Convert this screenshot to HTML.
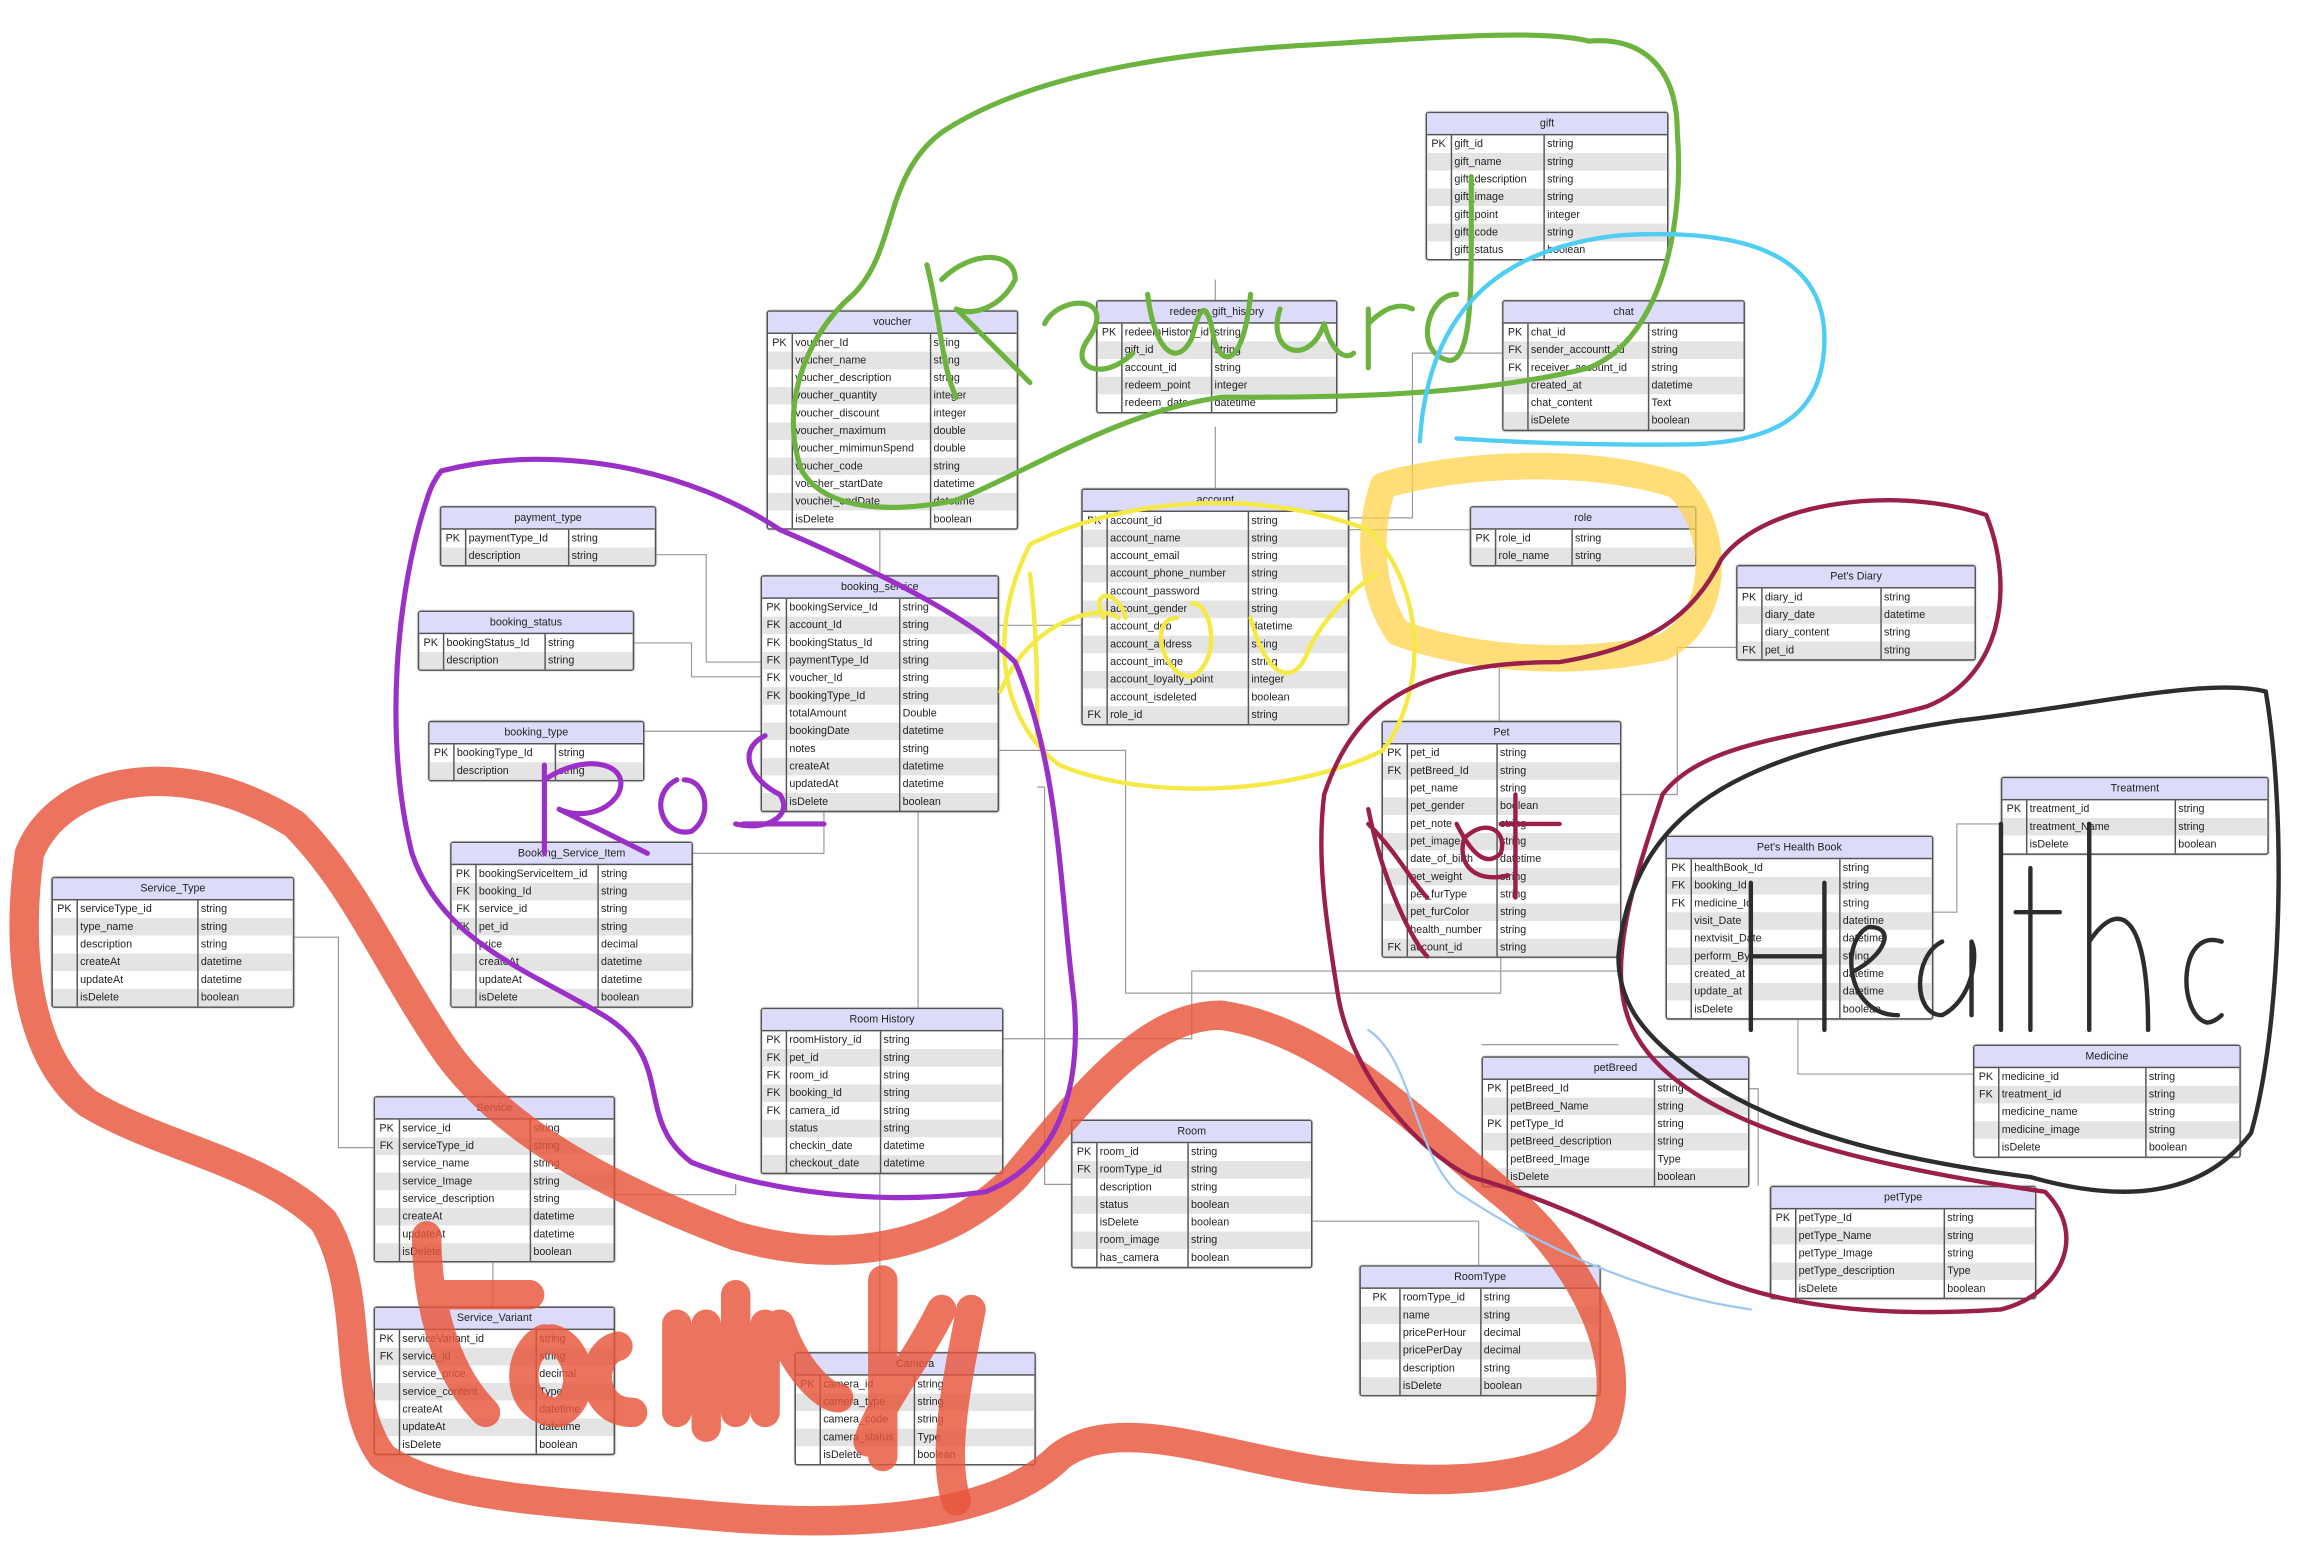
<!DOCTYPE html>
<html><head><meta charset="utf-8">
<style>
html,body{margin:0;padding:0;background:#fff;overflow:hidden;}
#w{position:absolute;left:0;top:0;width:1568px;height:1052px;transform:scale(1.4713);transform-origin:0 0;font-family:"Liberation Sans",sans-serif;}
.t{position:absolute;border:1px solid #555;border-radius:2px;background:#fff;font-size:7.3px;color:#222;box-shadow:0 0 1px #999;}
.t .h{height:14px;line-height:14px;text-align:center;background:#dcdcfa;border-bottom:1px solid #555;}
.t table{border-collapse:collapse;width:100%;table-layout:fixed;}
.t td{height:12px;padding:0 0 0 2px;white-space:nowrap;overflow:hidden;line-height:12px;}
.t td:nth-child(1){border-right:1px solid #555;text-align:center;padding:0;}
.t td:nth-child(2){border-right:1px solid #555;}
.t tr:nth-child(even) td{background:#e4e4e4;}
svg{position:absolute;left:0;top:0;}
</style></head><body><div id="w">
<svg width="1568" height="1052" style="z-index:0">
<g stroke="#999" stroke-width="0.8" fill="none">
<path d="M826 190V204M826 290V332M915 352H960V240H1021M915 360H999M1019 454V490M677 425H735M677 510H765V675H1020V650M598 358V391M444 377H480V450H517M429 437H470V460H517M436 497H517M469 580H560V540H677M624 550V685M598 797V919M416 812H500V805M680 706H810V660H1100M890 830H1005V860M198 637H230V780H254M335 854V888M1100 540H1140V440H1180M1312 620H1330V560H1360M1222 691V730H1341M1187 740H1195V806M1100 710H1007M705 535H710V805H728"/>
</g>
</svg>

<div class="t" style="left:969px;top:76px;width:163px"><div class="h">gift</div><table><colgroup><col style="width:16px"><col style="width:63px"><col></colgroup>
<tr><td>PK</td><td>gift_id</td><td>string</td></tr><tr><td></td><td>gift_name</td><td>string</td></tr><tr><td></td><td>gift_description</td><td>string</td></tr><tr><td></td><td>gift_image</td><td>string</td></tr><tr><td></td><td>gift_point</td><td>integer</td></tr><tr><td></td><td>gift_code</td><td>string</td></tr><tr><td></td><td>gift_status</td><td>boolean</td></tr></table></div>

<div class="t" style="left:521px;top:211px;width:169px"><div class="h">voucher</div><table><colgroup><col style="width:16px"><col style="width:94px"><col></colgroup>
<tr><td>PK</td><td>voucher_Id</td><td>string</td></tr><tr><td></td><td>voucher_name</td><td>string</td></tr><tr><td></td><td>voucher_description</td><td>string</td></tr><tr><td></td><td>voucher_quantity</td><td>integer</td></tr><tr><td></td><td>voucher_discount</td><td>integer</td></tr><tr><td></td><td>voucher_maximum</td><td>double</td></tr><tr><td></td><td>voucher_mimimunSpend</td><td>double</td></tr><tr><td></td><td>voucher_code</td><td>string</td></tr><tr><td></td><td>voucher_startDate</td><td>datetime</td></tr><tr><td></td><td>voucher_endDate</td><td>datetime</td></tr><tr><td></td><td>isDelete</td><td>boolean</td></tr></table></div>

<div class="t" style="left:745px;top:204px;width:162px"><div class="h">redeem_gift_history</div><table><colgroup><col style="width:16px"><col style="width:61px"><col></colgroup>
<tr><td>PK</td><td>redeemHistory_id</td><td>string</td></tr><tr><td></td><td>gift_id</td><td>string</td></tr><tr><td></td><td>account_id</td><td>string</td></tr><tr><td></td><td>redeem_point</td><td>integer</td></tr><tr><td></td><td>redeem_date</td><td>datetime</td></tr></table></div>

<div class="t" style="left:1021px;top:204px;width:163px"><div class="h">chat</div><table><colgroup><col style="width:16px"><col style="width:82px"><col></colgroup>
<tr><td>PK</td><td>chat_id</td><td>string</td></tr><tr><td>FK</td><td>sender_accountt_id</td><td>string</td></tr><tr><td>FK</td><td>receiver_account_id</td><td>string</td></tr><tr><td></td><td>created_at</td><td>datetime</td></tr><tr><td></td><td>chat_content</td><td>Text</td></tr><tr><td></td><td>isDelete</td><td>boolean</td></tr></table></div>

<div class="t" style="left:735px;top:332px;width:180px"><div class="h">account</div><table><colgroup><col style="width:16px"><col style="width:96px"><col></colgroup>
<tr><td>PK</td><td>account_id</td><td>string</td></tr><tr><td></td><td>account_name</td><td>string</td></tr><tr><td></td><td>account_email</td><td>string</td></tr><tr><td></td><td>account_phone_number</td><td>string</td></tr><tr><td></td><td>account_password</td><td>string</td></tr><tr><td></td><td>account_gender</td><td>string</td></tr><tr><td></td><td>account_dob</td><td>datetime</td></tr><tr><td></td><td>account_address</td><td>string</td></tr><tr><td></td><td>account_image</td><td>string</td></tr><tr><td></td><td>account_loyalty_point</td><td>integer</td></tr><tr><td></td><td>account_isdeleted</td><td>boolean</td></tr><tr><td>FK</td><td>role_id</td><td>string</td></tr></table></div>

<div class="t" style="left:999px;top:344px;width:152px"><div class="h">role</div><table><colgroup><col style="width:16px"><col style="width:52px"><col></colgroup>
<tr><td>PK</td><td>role_id</td><td>string</td></tr><tr><td></td><td>role_name</td><td>string</td></tr></table></div>

<div class="t" style="left:299px;top:344px;width:145px"><div class="h">payment_type</div><table><colgroup><col style="width:16px"><col style="width:70px"><col></colgroup>
<tr><td>PK</td><td>paymentType_Id</td><td>string</td></tr><tr><td></td><td>description</td><td>string</td></tr></table></div>

<div class="t" style="left:284px;top:415px;width:145px"><div class="h">booking_status</div><table><colgroup><col style="width:16px"><col style="width:69px"><col></colgroup>
<tr><td>PK</td><td>bookingStatus_Id</td><td>string</td></tr><tr><td></td><td>description</td><td>string</td></tr></table></div>

<div class="t" style="left:291px;top:490px;width:145px"><div class="h">booking_type</div><table><colgroup><col style="width:16px"><col style="width:69px"><col></colgroup>
<tr><td>PK</td><td>bookingType_Id</td><td>string</td></tr><tr><td></td><td>description</td><td>string</td></tr></table></div>

<div class="t" style="left:517px;top:391px;width:160px"><div class="h">booking_service</div><table><colgroup><col style="width:16px"><col style="width:77px"><col></colgroup>
<tr><td>PK</td><td>bookingService_Id</td><td>string</td></tr><tr><td>FK</td><td>account_Id</td><td>string</td></tr><tr><td>FK</td><td>bookingStatus_Id</td><td>string</td></tr><tr><td>FK</td><td>paymentType_Id</td><td>string</td></tr><tr><td>FK</td><td>voucher_Id</td><td>string</td></tr><tr><td>FK</td><td>bookingType_Id</td><td>string</td></tr><tr><td></td><td>totalAmount</td><td>Double</td></tr><tr><td></td><td>bookingDate</td><td>datetime</td></tr><tr><td></td><td>notes</td><td>string</td></tr><tr><td></td><td>createAt</td><td>datetime</td></tr><tr><td></td><td>updatedAt</td><td>datetime</td></tr><tr><td></td><td>isDelete</td><td>boolean</td></tr></table></div>

<div class="t" style="left:1180px;top:384px;width:161px"><div class="h">Pet's Diary</div><table><colgroup><col style="width:16px"><col style="width:81px"><col></colgroup>
<tr><td>PK</td><td>diary_id</td><td>string</td></tr><tr><td></td><td>diary_date</td><td>datetime</td></tr><tr><td></td><td>diary_content</td><td>string</td></tr><tr><td>FK</td><td>pet_id</td><td>string</td></tr></table></div>

<div class="t" style="left:939px;top:490px;width:161px"><div class="h">Pet</div><table><colgroup><col style="width:16px"><col style="width:61px"><col></colgroup>
<tr><td>PK</td><td>pet_id</td><td>string</td></tr><tr><td>FK</td><td>petBreed_Id</td><td>string</td></tr><tr><td></td><td>pet_name</td><td>string</td></tr><tr><td></td><td>pet_gender</td><td>boolean</td></tr><tr><td></td><td>pet_note</td><td>string</td></tr><tr><td></td><td>pet_image</td><td>string</td></tr><tr><td></td><td>date_of_birth</td><td>datetime</td></tr><tr><td></td><td>pet_weight</td><td>string</td></tr><tr><td></td><td>pet_furType</td><td>string</td></tr><tr><td></td><td>pet_furColor</td><td>string</td></tr><tr><td></td><td>health_number</td><td>string</td></tr><tr><td>FK</td><td>account_id</td><td>string</td></tr></table></div>

<div class="t" style="left:1360px;top:528px;width:180px"><div class="h">Treatment</div><table><colgroup><col style="width:16px"><col style="width:101px"><col></colgroup>
<tr><td>PK</td><td>treatment_id</td><td>string</td></tr><tr><td></td><td>treatment_Name</td><td>string</td></tr><tr><td></td><td>isDelete</td><td>boolean</td></tr></table></div>

<div class="t" style="left:1132px;top:568px;width:180px"><div class="h">Pet's Health Book</div><table><colgroup><col style="width:16px"><col style="width:101px"><col></colgroup>
<tr><td>PK</td><td>healthBook_Id</td><td>string</td></tr><tr><td>FK</td><td>booking_Id</td><td>string</td></tr><tr><td>FK</td><td>medicine_Id</td><td>string</td></tr><tr><td></td><td>visit_Date</td><td>datetime</td></tr><tr><td></td><td>nextvisit_Date</td><td>datetime</td></tr><tr><td></td><td>perform_By</td><td>string</td></tr><tr><td></td><td>created_at</td><td>datetime</td></tr><tr><td></td><td>update_at</td><td>datetime</td></tr><tr><td></td><td>isDelete</td><td>boolean</td></tr></table></div>

<div class="t" style="left:35px;top:596px;width:163px"><div class="h">Service_Type</div><table><colgroup><col style="width:16px"><col style="width:82px"><col></colgroup>
<tr><td>PK</td><td>serviceType_id</td><td>string</td></tr><tr><td></td><td>type_name</td><td>string</td></tr><tr><td></td><td>description</td><td>string</td></tr><tr><td></td><td>createAt</td><td>datetime</td></tr><tr><td></td><td>updateAt</td><td>datetime</td></tr><tr><td></td><td>isDelete</td><td>boolean</td></tr></table></div>

<div class="t" style="left:306px;top:572px;width:163px"><div class="h">Booking_Service_Item</div><table><colgroup><col style="width:16px"><col style="width:83px"><col></colgroup>
<tr><td>PK</td><td>bookingServiceItem_id</td><td>string</td></tr><tr><td>FK</td><td>booking_Id</td><td>string</td></tr><tr><td>FK</td><td>service_id</td><td>string</td></tr><tr><td>FK</td><td>pet_id</td><td>string</td></tr><tr><td></td><td>price</td><td>decimal</td></tr><tr><td></td><td>createAt</td><td>datetime</td></tr><tr><td></td><td>updateAt</td><td>datetime</td></tr><tr><td></td><td>isDelete</td><td>boolean</td></tr></table></div>

<div class="t" style="left:517px;top:685px;width:163px"><div class="h">Room History</div><table><colgroup><col style="width:16px"><col style="width:64px"><col></colgroup>
<tr><td>PK</td><td>roomHistory_id</td><td>string</td></tr><tr><td>FK</td><td>pet_id</td><td>string</td></tr><tr><td>FK</td><td>room_id</td><td>string</td></tr><tr><td>FK</td><td>booking_Id</td><td>string</td></tr><tr><td>FK</td><td>camera_id</td><td>string</td></tr><tr><td></td><td>status</td><td>string</td></tr><tr><td></td><td>checkin_date</td><td>datetime</td></tr><tr><td></td><td>checkout_date</td><td>datetime</td></tr></table></div>

<div class="t" style="left:254px;top:745px;width:162px"><div class="h">Service</div><table><colgroup><col style="width:16px"><col style="width:89px"><col></colgroup>
<tr><td>PK</td><td>service_id</td><td>string</td></tr><tr><td>FK</td><td>serviceType_id</td><td>string</td></tr><tr><td></td><td>service_name</td><td>string</td></tr><tr><td></td><td>service_Image</td><td>string</td></tr><tr><td></td><td>service_description</td><td>string</td></tr><tr><td></td><td>createAt</td><td>datetime</td></tr><tr><td></td><td>updateAt</td><td>datetime</td></tr><tr><td></td><td>isDelete</td><td>boolean</td></tr></table></div>

<div class="t" style="left:728px;top:761px;width:162px"><div class="h">Room</div><table><colgroup><col style="width:16px"><col style="width:62px"><col></colgroup>
<tr><td>PK</td><td>room_id</td><td>string</td></tr><tr><td>FK</td><td>roomType_id</td><td>string</td></tr><tr><td></td><td>description</td><td>string</td></tr><tr><td></td><td>status</td><td>boolean</td></tr><tr><td></td><td>isDelete</td><td>boolean</td></tr><tr><td></td><td>room_image</td><td>string</td></tr><tr><td></td><td>has_camera</td><td>boolean</td></tr></table></div>

<div class="t" style="left:1007px;top:718px;width:180px"><div class="h">petBreed</div><table><colgroup><col style="width:16px"><col style="width:100px"><col></colgroup>
<tr><td>PK</td><td>petBreed_Id</td><td>string</td></tr><tr><td></td><td>petBreed_Name</td><td>string</td></tr><tr><td>PK</td><td>petType_Id</td><td>string</td></tr><tr><td></td><td>petBreed_description</td><td>string</td></tr><tr><td></td><td>petBreed_Image</td><td>Type</td></tr><tr><td></td><td>isDelete</td><td>boolean</td></tr></table></div>

<div class="t" style="left:1341px;top:710px;width:180px"><div class="h">Medicine</div><table><colgroup><col style="width:16px"><col style="width:100px"><col></colgroup>
<tr><td>PK</td><td>medicine_id</td><td>string</td></tr><tr><td>FK</td><td>treatment_id</td><td>string</td></tr><tr><td></td><td>medicine_name</td><td>string</td></tr><tr><td></td><td>medicine_image</td><td>string</td></tr><tr><td></td><td>isDelete</td><td>boolean</td></tr></table></div>

<div class="t" style="left:1203px;top:806px;width:179px"><div class="h">petType</div><table><colgroup><col style="width:16px"><col style="width:101px"><col></colgroup>
<tr><td>PK</td><td>petType_Id</td><td>string</td></tr><tr><td></td><td>petType_Name</td><td>string</td></tr><tr><td></td><td>petType_Image</td><td>string</td></tr><tr><td></td><td>petType_description</td><td>Type</td></tr><tr><td></td><td>isDelete</td><td>boolean</td></tr></table></div>

<div class="t" style="left:924px;top:860px;width:162px"><div class="h">RoomType</div><table><colgroup><col style="width:26px"><col style="width:55px"><col></colgroup>
<tr><td>PK</td><td>roomType_id</td><td>string</td></tr><tr><td></td><td>name</td><td>string</td></tr><tr><td></td><td>pricePerHour</td><td>decimal</td></tr><tr><td></td><td>pricePerDay</td><td>decimal</td></tr><tr><td></td><td>description</td><td>string</td></tr><tr><td></td><td>isDelete</td><td>boolean</td></tr></table></div>

<div class="t" style="left:254px;top:888px;width:162px"><div class="h">Service_Variant</div><table><colgroup><col style="width:16px"><col style="width:93px"><col></colgroup>
<tr><td>PK</td><td>serviceVariant_id</td><td>string</td></tr><tr><td>FK</td><td>service_id</td><td>string</td></tr><tr><td></td><td>service_price</td><td>decimal</td></tr><tr><td></td><td>service_content</td><td>Type</td></tr><tr><td></td><td>createAt</td><td>datetime</td></tr><tr><td></td><td>updateAt</td><td>datetime</td></tr><tr><td></td><td>isDelete</td><td>boolean</td></tr></table></div>

<div class="t" style="left:540px;top:919px;width:162px"><div class="h">Camera</div><table><colgroup><col style="width:16px"><col style="width:64px"><col></colgroup>
<tr><td>PK</td><td>camera_id</td><td>string</td></tr><tr><td></td><td>camera_type</td><td>string</td></tr><tr><td></td><td>camera_code</td><td>string</td></tr><tr><td></td><td>camera_status</td><td>Type</td></tr><tr><td></td><td>isDelete</td><td>boolean</td></tr></table></div>

<svg width="1568" height="1052" style="z-index:5" fill="none" stroke-linecap="round" stroke-linejoin="round">
<g stroke="#e8553c" stroke-opacity="0.82" stroke-width="20">
<path d="M20 580C40 530 120 510 200 560C240 600 260 650 300 710C340 770 420 810 500 840C570 860 640 850 690 800C740 740 780 690 830 690C900 700 960 760 1020 810C1070 850 1110 920 1090 970C1060 1010 970 1010 900 1000C830 990 760 960 720 990C680 1030 590 1040 480 1030C380 1020 300 1020 260 990C230 950 250 880 220 830C180 790 110 780 60 750C20 720 10 650 20 580Z"/>
<path d="M290 840C290 880 300 930 330 960M300 880H360M370 910C350 920 350 960 380 960C400 950 395 915 375 910M420 915C400 920 400 960 430 960M460 900V960M480 900V970M500 880V960M520 900V960M530 900C540 930 560 950 570 950M600 870V990M640 890C620 930 600 950 590 980M660 890C650 940 640 990 650 1020"/>
</g>
<g stroke="#6db33f" stroke-width="3.5">
<path d="M1080 28C1110 25 1140 40 1140 90C1145 150 1130 230 1080 250C1000 270 900 270 830 270C760 280 700 320 650 340C600 350 560 345 545 320C530 280 545 230 580 200C610 170 600 120 640 90C700 50 800 35 900 30C980 25 1050 20 1080 28Z"/>
<path d="M630 180C640 220 640 250 650 270M640 190C660 170 690 170 690 190C680 210 660 215 650 210C670 230 690 250 700 260M710 220C720 200 760 200 740 230C725 250 750 260 770 240M780 200C785 240 800 250 810 230C815 210 820 200 825 230C830 250 845 250 850 200M870 210C860 240 890 250 900 220C905 240 915 245 920 240M930 210V250M930 220C940 210 950 205 960 210M990 200C970 200 960 240 985 245C1000 245 1000 200 1000 150V120"/>
</g>
<path d="M965 300C970 220 1010 170 1100 160C1180 155 1240 170 1240 230C1240 280 1210 300 1150 302C1080 303 1020 300 990 298" stroke="#4fcdf2" stroke-width="3"/>
<path d="M940 330C990 315 1080 310 1140 330C1170 360 1170 420 1130 440C1060 455 990 445 950 430C930 400 930 360 940 330Z" stroke="#ffd34a" stroke-opacity="0.75" stroke-width="18"/>
<path d="M700 370C760 340 850 330 930 360C970 400 970 470 940 510C880 540 780 545 720 520C680 490 670 430 700 370Z" stroke="#f5ea45" stroke-width="3"/>
<path d="M680 470C700 420 750 410 760 420M700 390C705 430 705 470 705 500M750 420C740 400 760 400 765 420M800 420C780 420 790 460 810 460C830 450 825 410 810 410M850 420C860 460 880 470 890 440C900 420 920 400 935 390" stroke="#f5ea45" stroke-width="3"/>
<g stroke="#9b30c8" stroke-width="3.5">
<path d="M300 320C380 300 470 320 530 360C600 390 660 420 690 450C720 520 720 600 730 680C735 740 720 790 670 810C600 820 520 810 470 790C430 760 460 720 410 690C360 660 300 640 280 580C260 500 270 400 290 340C293 330 296 325 300 320Z"/>
<path d="M370 520V580M370 530C400 510 430 520 420 540C410 555 390 555 380 550C400 560 420 570 440 580M460 530C440 540 450 570 470 565C485 555 480 530 465 530M520 500C500 510 510 530 530 540C540 555 520 565 500 560M505 560H560"/>
</g>
<g stroke="#9a1f4a" stroke-width="3">
<path d="M900 540C920 480 960 450 1060 450C1120 440 1150 420 1170 380C1200 340 1290 330 1350 350C1370 400 1360 460 1310 480C1240 500 1160 500 1130 540C1110 600 1090 660 1110 700C1140 760 1250 790 1390 810C1420 840 1400 880 1360 890C1290 895 1220 890 1170 870C1120 850 1070 820 1000 800C960 780 920 730 910 680C900 620 895 580 900 540Z"/>
<path d="M930 560C950 580 960 600 970 610M930 550C940 600 960 640 970 650M990 560C1000 580 1010 590 1020 580C1025 565 1010 555 995 570C990 590 1005 600 1025 595M1030 540V610M1020 560H1060"/>
</g>
<g stroke="#2d2d2d" stroke-width="3">
<path d="M1100 650C1110 540 1200 510 1330 490C1420 480 1500 460 1540 470C1555 560 1550 700 1530 770C1500 810 1450 820 1380 800C1300 790 1200 770 1140 720C1115 700 1100 680 1100 650Z"/>
<path d="M1190 600V700M1240 600V700M1190 650H1240M1260 660C1280 650 1290 630 1270 630C1250 640 1255 690 1290 690M1320 640C1300 650 1300 690 1320 690C1340 680 1345 650 1340 640V690M1360 560V700M1380 590V700M1370 620H1400M1420 560V700M1420 640C1440 610 1460 620 1460 700M1510 640C1480 630 1480 690 1500 695C1505 695 1510 690 1510 690"/>
</g>
<path d="M930 700C960 720 960 780 990 810C1050 850 1120 880 1190 890" stroke="#9ac8f2" stroke-width="1.5"/>
</svg>
</div></body></html>
